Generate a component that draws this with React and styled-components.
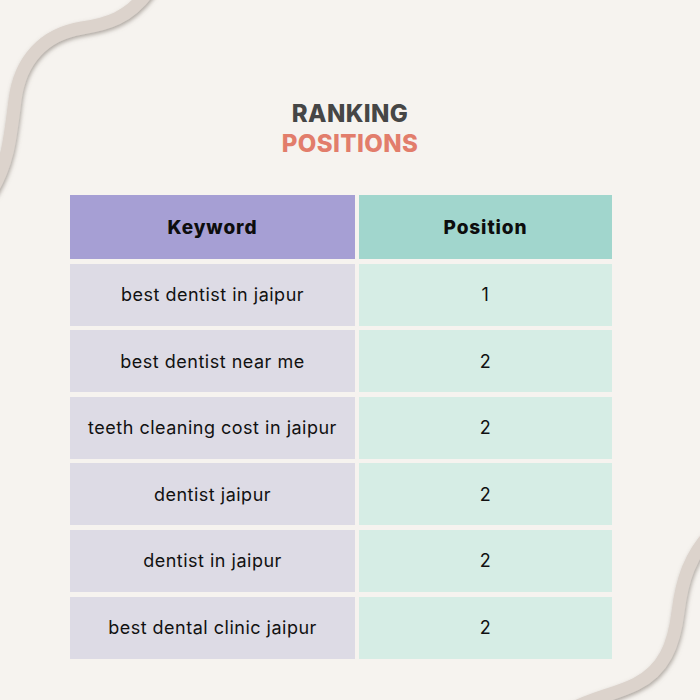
import React from 'react';
import styled, { createGlobalStyle } from 'styled-components';

const GlobalStyle = createGlobalStyle`
  html, body {
    margin: 0;
    padding: 0;
    background: #f6f3ef;
  }
  * { box-sizing: border-box; }
`;

const rows = [
  { keyword: 'best dentist in jaipur', position: 1 },
  { keyword: 'best dentist near me', position: 2 },
  { keyword: 'teeth cleaning cost in jaipur', position: 2 },
  { keyword: 'dentist jaipur', position: 2 },
  { keyword: 'dentist in jaipur', position: 2 },
  { keyword: 'best dental clinic jaipur', position: 2 },
];

function Swoosh() {
  return (
    <Decor viewBox="0 0 700 700" width="700" height="700">
      <defs>
        <filter id="sh" x="-20%" y="-20%" width="140%" height="140%">
          <feDropShadow dx="1" dy="2" stdDeviation="2" floodColor="#7d726b" floodOpacity="0.6" />
        </filter>
      </defs>
      <g fill="none" stroke="#dcd3cc" strokeWidth="13" strokeLinecap="round" filter="url(#sh)">
        <path d="M148 -8 C128 18 108 24 82 28 C44 34 20 60 15 100 C10 140 8 162 -8 190" />
        <path d="M712 532 C690 555 682 580 678 612 C674 645 664 670 636 684 C614 695 590 698 566 712" />
      </g>
    </Decor>
  );
}

export default function App() {
  return (
    <>
      <GlobalStyle />
      <Page>
        <Swoosh />
        <Heading>
          <TitleLine>RANKING</TitleLine>
          <TitleLine accent>POSITIONS</TitleLine>
        </Heading>
        <Table>
          <HeadCell tone="purple">Keyword</HeadCell>
          <HeadCell tone="teal">Position</HeadCell>
          {rows.map((r) => (
            <React.Fragment key={r.keyword}>
              <Cell tone="purple">{r.keyword}</Cell>
              <Cell tone="teal">{r.position}</Cell>
            </React.Fragment>
          ))}
        </Table>
      </Page>
    </>
  );
}

const Page = styled.div`
  position: relative;
  width: 700px;
  height: 700px;
  overflow: hidden;
  background: #f6f3ef;
  padding-top: 99px;
  font-family: Inter, 'Noto Sans', sans-serif;
`;

const Decor = styled.svg`
  position: absolute;
  left: 0;
  top: 0;
  pointer-events: none;
`;

const Heading = styled.div`
  display: flex;
  flex-direction: column;
  align-items: center;
`;

const TitleLine = styled.div`
  font-family: Inter, 'Noto Sans', sans-serif;
  font-weight: 800;
  font-size: 24px;
  line-height: 30px;
  letter-spacing: 0.4px;
  color: ${(p) => (p.accent ? '#e27d6b' : '#464646')};
`;

const Table = styled.div`
  display: grid;
  grid-template-columns: 285px 253px;
  grid-template-rows: 64px;
  grid-auto-rows: 62px;
  column-gap: 4px;
  row-gap: 4.6px;
  margin: 36px 0 0 70px;
`;

const HeadCell = styled.div`
  display: flex;
  align-items: center;
  justify-content: center;
  background: ${(p) => (p.tone === 'purple' ? '#a69fd4' : '#a1d6cd')};
  font-weight: 800;
  font-size: 19px;
  letter-spacing: 0.9px;
  color: #0d0d0d;
`;

const Cell = styled.div`
  display: flex;
  align-items: center;
  justify-content: center;
  background: ${(p) => (p.tone === 'purple' ? '#dddbe5' : '#d6ede5')};
  font-size: 18px;
  letter-spacing: 0.5px;
  color: #111;
`;
